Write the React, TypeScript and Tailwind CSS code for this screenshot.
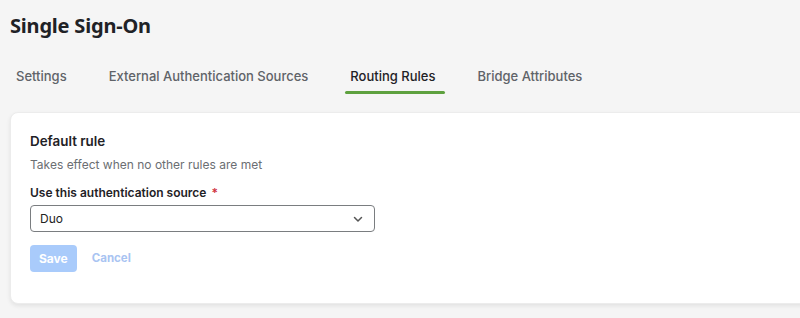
import React from "react";

const tabs = [
  { label: "Settings", active: false },
  { label: "External Authentication Sources", active: false },
  { label: "Routing Rules", active: true },
  { label: "Bridge Attributes", active: false },
];

const App: React.FC = () => {
  return (
    <div className="w-[800px] h-[318px] overflow-hidden bg-[#f5f5f5] font-['Inter',sans-serif] text-[#222]">
      <h1 className="pl-[10px] pt-[12px] text-[20px] leading-[28px] font-bold text-[#1f2226] font-['Noto_Sans',sans-serif] tracking-[-0.2px]">
        Single Sign-On
      </h1>
      <nav className="flex mt-[26px] pl-[16px] gap-[42px]">
        {tabs.map((t) => (
          <div key={t.label} className="flex flex-col items-start">
            <span
              className={
                t.active
                  ? "text-[13px] leading-[20px] font-medium text-[#1f2226]"
                  : "text-[13px] leading-[20px] font-medium text-[#5f6368]"
              }
            >
              {t.label}
            </span>
            <span
              className={
                t.active
                  ? "mt-[5px] ml-[-5px] h-[3px] w-[calc(100%+15px)] rounded-full bg-[#5ea13f]"
                  : "mt-[5px] h-[3px] w-full"
              }
            />
          </div>
        ))}
      </nav>
      <div className="ml-[10px] mt-[18px] w-[800px] h-[192px] rounded-[8px] bg-white border border-[#ececec] shadow-[0_2px_4px_rgba(0,0,0,0.08)] pl-[19px] pt-[18px]">
        <h2 className="text-[13.4px] leading-[20px] font-semibold text-[#1f2226]">Default rule</h2>
        <p className="mt-[6px] text-[12px] leading-[16px] text-[#6b6e72]">
          Takes effect when no other rules are met
        </p>
        <label className="block mt-[12px] text-[12px] leading-[16px] font-semibold text-[#1f2226]">
          Use this authentication source <span className="text-[#d0343f] ml-[2px]">*</span>
        </label>
        <div className="mt-[4px] w-[345px] h-[27px] rounded-[4px] border border-[#7a7d80] flex items-center justify-between pl-[9px] pr-[10px]">
          <span className="text-[12px] text-[#222]">Duo</span>
          <svg width="12" height="12" viewBox="0 0 12 12" fill="none" stroke="#555" strokeWidth="1.5" strokeLinecap="round" strokeLinejoin="round">
            <path d="M2.5 4.5 6 8l3.5-3.5" />
          </svg>
        </div>
        <div className="flex items-center mt-[13px] gap-[15px]">
          <button className="h-[27px] px-[9px] rounded-[4px] bg-[#a9cbfb] text-white text-[12px] font-bold">
            Save
          </button>
          <button className="text-[11.5px] font-bold text-[#a9c4f2]">Cancel</button>
        </div>
      </div>
    </div>
  );
};

export default App;
